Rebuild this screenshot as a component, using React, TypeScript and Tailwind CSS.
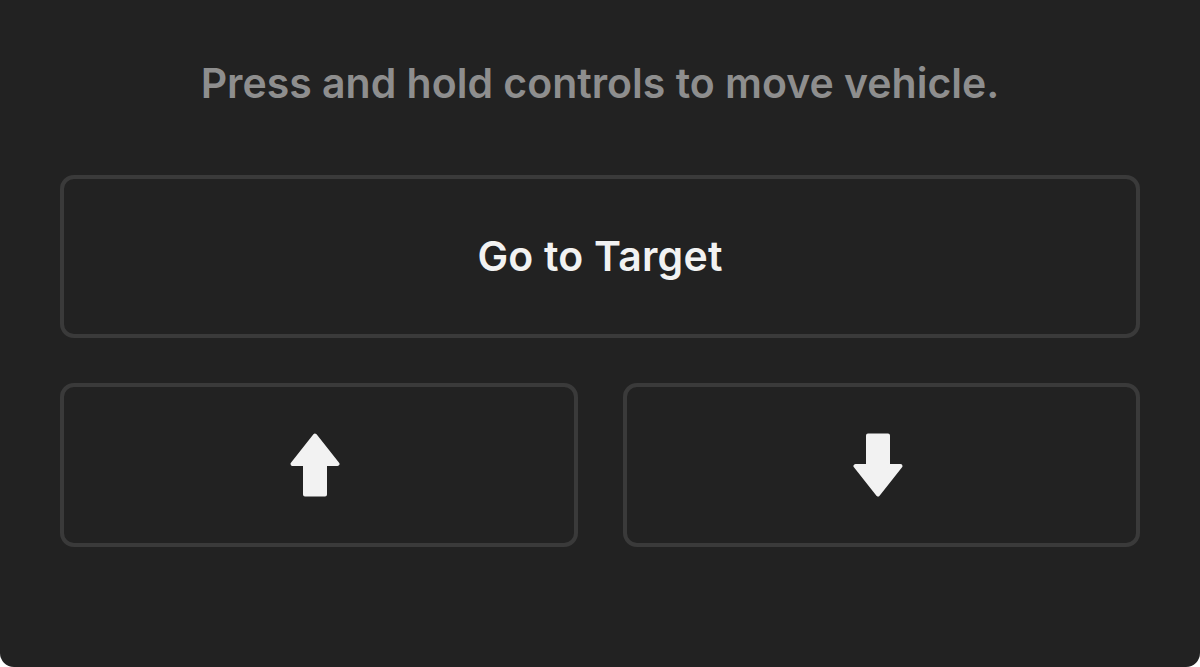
export default function App() {
  return (
    <div className="w-[1200px] h-[667px] bg-white">
      <div
        className="w-full h-full bg-[#222222] rounded-b-[14px] px-[60px] pt-[59px] flex flex-col"
        style={{ fontFamily: 'Inter, "Liberation Sans", sans-serif' }}
      >
        <p className="text-center text-[41px] leading-[48px] font-semibold text-[#8e8e8e]">
          Press and hold controls to move vehicle.
        </p>

        <button className="mt-[68px] h-[163px] w-full rounded-[14px] border-[4px] border-[#3a3a3a] flex items-center justify-center">
          <span className="text-[41px] font-semibold text-[#f2f2f2] tracking-[0.005em]">Go to Target</span>
        </button>

        <div className="mt-[45px] grid grid-cols-2 gap-[45px]">
          <button className="h-[164px] rounded-[14px] border-[4px] border-[#3a3a3a] flex items-center justify-center">
            <Arrow dir="up" />
          </button>
          <button className="h-[164px] rounded-[14px] border-[4px] border-[#3a3a3a] flex items-center justify-center">
            <Arrow dir="down" />
          </button>
        </div>
      </div>
    </div>
  );
}

function Arrow({ dir }: { dir: 'up' | 'down' }) {
  return (
    <svg
      width="50"
      height="64"
      viewBox="0 0 50 64"
      className={dir === 'down' ? 'rotate-180 -ml-[6px]' : '-ml-[8px]'}
    >
      <path
        d="M25 2.5 L47.5 31 L35 31 L35 61.5 L15 61.5 L15 31 L2.5 31 Z"
        fill="#f2f2f2"
        stroke="#f2f2f2"
        strokeWidth="4"
        strokeLinejoin="round"
      />
    </svg>
  );
}
